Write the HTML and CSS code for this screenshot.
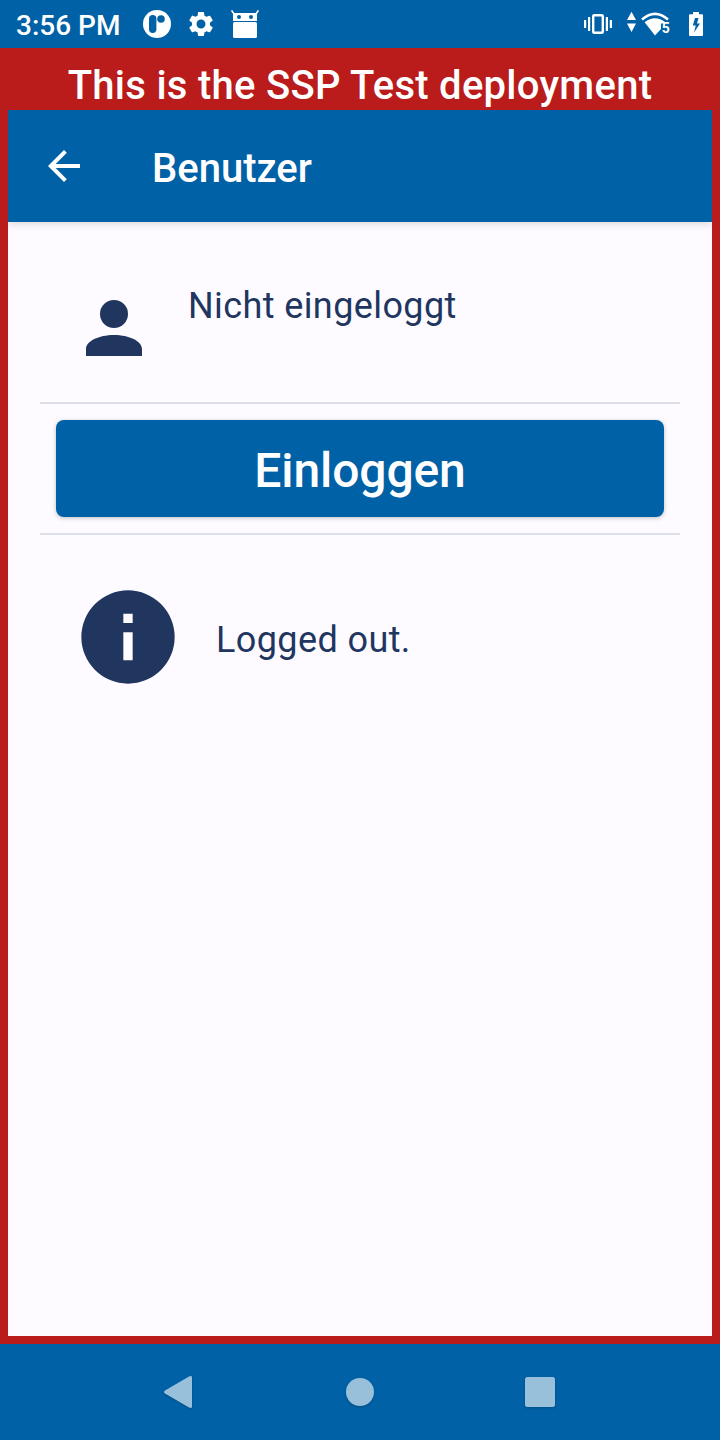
FILE: index.html
```
<!DOCTYPE html>
<html lang="de">
<head>
<meta charset="utf-8">
<title>Benutzer</title>
<link rel="stylesheet" href="styles.css">
</head>
<body>
<div class="screen">
  <header class="status">
    <span class="clock">3:56 PM</span>
    <svg class="app-icon" width="28" height="28" viewBox="0 0 28 28"><circle cx="14" cy="14" r="14" fill="#fff"/><rect x="6" y="5" width="7.400" height="18" rx="3.700" fill="#0061a6"/><circle cx="18" cy="9" r="3.800" fill="#0061a6"/></svg>
    <svg class="gear" width="30" height="30" viewBox="0 0 24 24" fill="#fff"><path d="M19.14 12.94c.04-.3.06-.61.06-.94 0-.32-.02-.64-.07-.94l2.03-1.58c.18-.14.23-.41.12-.61l-1.92-3.32c-.12-.22-.37-.29-.59-.22l-2.39.96c-.5-.38-1.03-.7-1.62-.94l-.36-2.54c-.04-.24-.24-.41-.48-.41h-3.84c-.24 0-.43.17-.47.41l-.36 2.54c-.59.24-1.13.57-1.62.94l-2.39-.96c-.22-.08-.47 0-.59.22L2.74 8.87c-.12.21-.08.47.12.61l2.03 1.58c-.05.3-.09.63-.09.94s.02.64.07.94l-2.03 1.58c-.18.14-.23.41-.12.61l1.92 3.32c.12.22.37.29.59.22l2.39-.96c.5.38 1.03.7 1.62.94l.36 2.54c.05.24.24.41.48.41h3.84c.24 0 .44-.17.47-.41l.36-2.54c.59-.24 1.13-.56 1.62-.94l2.39.96c.22.08.47 0 .59-.22l1.92-3.32c.12-.22.07-.47-.12-.61l-2.01-1.58zM12 15.6c-1.98 0-3.6-1.62-3.6-3.6s1.62-3.6 3.6-3.6 3.6 1.62 3.6 3.6-1.62 3.6-3.6 3.6z"/></svg>
    <svg class="robot" width="28" height="28" viewBox="0 0 28 28"><path d="M.6.4 3.400 4.500M27.400.4 24.600 4.500" stroke="#fff" stroke-width="1.600"/><path d="M2 3h24v8H2z" fill="#fff"/><rect x="2" y="12" width="24" height="16" rx="1.600" fill="#fff"/><circle cx="8" cy="7" r="2" fill="#0061a6"/><circle cx="20" cy="7" r="2" fill="#0061a6"/></svg>
    <svg class="vibrate" width="28" height="28" viewBox="0 0 28 28" fill="#fff"><path d="M0 10h2.200v8H0zM4 7h2.200v14H4zM21.800 7H24v14h-2.200zM25.800 10H28v8h-2.200z"/><rect x="9.200" y="5.200" width="9.600" height="17.600" rx="1" fill="none" stroke="#fff" stroke-width="2.400"/></svg>
    <svg class="wifi" width="44" height="28" viewBox="0 0 44 28"><path d="M0 10h9L4.500 1.800zM0 13.500h9L4.500 22z" fill="#fff"/><path d="M15 9.600Q28 -1.800 41 9.600" fill="none" stroke="#fff" stroke-width="2.600"/><path d="M17.600 12.300Q28 4.200 38.400 12.300L37.400 13.500H34V19L28 25.500z" fill="#fff"/><text class="band" x="34.800" y="23.200">5</text></svg>
    <svg class="battery" width="14" height="24" viewBox="0 0 14 24"><path d="M1 2.200H4V.5Q4 0 4.500 0h5q.5 0 .5.500V2.200h3Q14 2.200 14 3.200v19.800q0 1-1 1H1q-1 0-1-1V3.200q0-1 1-1z" fill="#fff"/><path d="M9.500 6H6L3.800 13.500H6.800L5 20.500 11 11.500H8z" fill="#0061a6"/></svg>
  </header>
  <div class="frame">
    <div class="banner">This is the SSP Test deployment</div>
    <main class="app">
      <div class="appbar">
        <svg width="48" height="48" viewBox="0 0 24 24" fill="#fff"><path d="M20 11H7.830l5.590-5.590L12 4l-8 8 8 8 1.410-1.410L7.830 13H20v-2z"/></svg>
        <h1 class="title">Benutzer</h1>
      </div>
      <div class="content">
        <section class="user">
          <svg width="84" height="84" viewBox="0 0 24 24" fill="#21365f"><path d="M12 4A4 4 0 1 1 12 12A4 4 0 1 1 12 4M12 14C16.420 14 20 15.790 20 18V20H4V18C4 15.790 7.580 14 12 14Z"/></svg>
          <span class="body-text">Nicht eingeloggt</span>
        </section>
        <div class="action"><button class="login">Einloggen</button></div>
        <section class="info">
          <svg width="112" height="112" viewBox="0 0 24 24" fill="#21365f"><path d="M13 9H11V7H13M13 17H11V11H13M12 2A10 10 0 0 0 2 12A10 10 0 0 0 12 22A10 10 0 0 0 22 12A10 10 0 0 0 12 2Z"/></svg>
          <span class="body-text">Logged out.</span>
        </section>
      </div>
    </main>
  </div>
  <nav class="nav">
    <svg width="36" height="36" viewBox="0 0 36 36"><path d="M3 16.600 27 2.400q2.500-1.200 3 .6V33q-.5 1.800-3 .6L3 19.400q-2-1.400 0-2.800z"/></svg>
    <svg width="36" height="36" viewBox="0 0 36 36"><circle cx="18" cy="18" r="14"/></svg>
    <svg width="36" height="36" viewBox="0 0 36 36"><rect x="3" y="3" width="30" height="30" rx="2.500"/></svg>
  </nav>
</div>
</body>
</html>
```
FILE: styles.css
```
* { box-sizing: border-box; }
body { margin: 0; font-family: Roboto, "Liberation Sans", sans-serif; }
svg { display: block; flex: none; }
.screen { width: 720px; height: 1440px; display: flex; flex-direction: column; background: #0061a6; }
.status { height: 48px; flex: none; display: flex; align-items: center; padding: 0 17px 0 16px; color: #fff; }
.clock { width: 127px; font-size: 28px; font-weight: 500; line-height: 33px; padding-top: 2px; white-space: nowrap; }
.gear { margin-left: 15px; }
.robot { margin-left: 15px; }
.vibrate { margin-left: auto; }
.wifi { margin-left: 15px; }
.battery { margin-left: 18px; }
.band { font: 700 14px Roboto, sans-serif; fill: #fff; }
.frame { flex: 1; display: flex; flex-direction: column; padding: 0 8px 8px; background: #ba1b1b; }
.banner { height: 62px; flex: none; padding-top: 14px; text-align: center; color: #fff; font-size: 40px; font-weight: 500; line-height: 47px; letter-spacing: .27px; white-space: nowrap; }
.app { flex: 1; display: flex; flex-direction: column; background: #fdfbff; }
.appbar { height: 112px; flex: none; display: flex; align-items: center; gap: 64px; padding-left: 32px; background: #0061a6; box-shadow: 0 2px 8px rgba(0, 0, 0, .15); clip-path: inset(0 0 -16px 0); }
.title { margin: 0; padding-top: 6px; color: #fff; font-size: 40px; font-weight: 500; line-height: 48px; }
.content { padding: 0 32px; }
.user { height: 180px; display: flex; align-items: flex-start; gap: 32px; padding: 64px 0 0 32px; }
.body-text { color: #21365f; font-size: 36px; letter-spacing: .4px; line-height: 42px; white-space: nowrap; }
.user .body-text { margin-top: -1px; }
.action { padding: 16px; border: solid #dcdfe9; border-width: 2px 0; height: 133px; }
.login { display: block; width: 608px; height: 97px; padding: 4px 0 0; border: 0; border-radius: 8px; background: #0061a6; box-shadow: 0 1px 4px rgba(0, 0, 0, .25); color: #fff; font: 500 48px/56px Roboto, sans-serif; letter-spacing: -.1px; }
.info { display: flex; align-items: center; gap: 32px; padding: 46px 0 0 32px; }
.info .body-text { margin-top: 6px; }
.nav { height: 96px; flex: none; display: flex; justify-content: center; align-items: center; gap: 144px; fill: #99c0db; }
.nav svg { filter: drop-shadow(0 1px 1px rgba(0, 0, 0, .2)); }
```
